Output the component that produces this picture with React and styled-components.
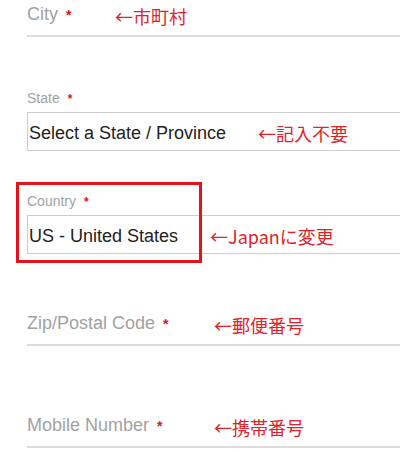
import React from "react";
import styled, { createGlobalStyle } from "styled-components";

const Global = createGlobalStyle`
  html, body { margin: 0; padding: 0; background: #fff; overflow: hidden; }
  body { font-family: "Liberation Sans", Arial, sans-serif; }
`;

const Page = styled.div`
  width: 400px;
  height: 452px;
  overflow: hidden;
`;

const Form = styled.form`
  display: flex;
  flex-direction: column;
  width: 480px;
  padding-left: 27px;
`;

const UnderlineField = styled.div`
  display: flex;
  align-items: flex-start;
  height: 22px;
  margin-top: ${(p) => p.$top}px;
  padding-bottom: 10px;
  border-bottom: 2px solid #dcdcdc;
`;

const FloatLabel = styled.label`
  min-width: ${(p) => p.$w}px;
  font-size: 18px;
  line-height: 22px;
  color: #a2a2a2;
`;

const SelectField = styled.div`
  position: relative;
  display: flex;
  flex-direction: column;
  gap: 4px;
  margin-top: ${(p) => p.$top}px;
`;

const SmallLabel = styled.label`
  font-size: 14px;
  line-height: 17px;
  color: #a2a2a2;
`;

const Req = styled.span`
  margin-left: 8px;
  font-size: ${(p) => (p.$small ? 12 : 14)}px;
  font-weight: bold;
  color: #d9141e;
`;

const SelectBox = styled.div`
  box-sizing: border-box;
  display: flex;
  align-items: center;
  gap: 32px;
  height: 39px;
  padding: 3px 0 0 1px;
  border: 1px solid #cdcdcd;
  background: #fff;
  font-size: 18px;
  color: #222;
`;

const Note = styled.span`
  padding-top: ${(p) => (p.$inline ? 0 : 4)}px;
  font-family: "Noto Sans CJK JP", "Liberation Sans", sans-serif;
  font-size: 18px;
  line-height: 18px;
  color: #e2222a;
  white-space: nowrap;
`;

const Highlight = styled.div`
  position: absolute;
  left: -11px;
  top: -11px;
  width: 186px;
  height: 81px;
  box-sizing: border-box;
  border: 3px solid #e6121b;
  pointer-events: none;
`;

export default function App() {
  return (
    <Page>
      <Global />
      <Form>
        <UnderlineField $top={3}>
          <FloatLabel $w={88}>
            City<Req>*</Req>
          </FloatLabel>
          <Note>←市町村</Note>
        </UnderlineField>

        <SelectField $top={53}>
          <SmallLabel>
            State<Req $small>*</Req>
          </SmallLabel>
          <SelectBox>
            <span>Select a State / Province</span>
            <Note $inline>←記入不要</Note>
          </SelectBox>
        </SelectField>

        <SelectField $top={42}>
          <SmallLabel>
            Country<Req $small>*</Req>
          </SmallLabel>
          <SelectBox>
            <span>US - United States</span>
            <Note $inline>←Japanに変更</Note>
          </SelectBox>
          <Highlight />
        </SelectField>

        <UnderlineField $top={58}>
          <FloatLabel $w={187}>
            Zip/Postal Code<Req>*</Req>
          </FloatLabel>
          <Note>←郵便番号</Note>
        </UnderlineField>

        <UnderlineField $top={68}>
          <FloatLabel $w={187}>
            Mobile Number<Req>*</Req>
          </FloatLabel>
          <Note>←携帯番号</Note>
        </UnderlineField>
      </Form>
    </Page>
  );
}
